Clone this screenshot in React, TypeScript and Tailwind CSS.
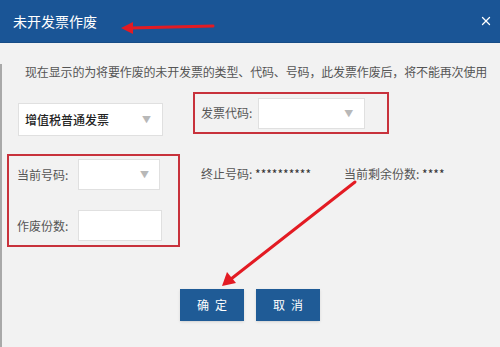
import { X } from 'lucide-react'

const font = { fontFamily: '"Noto Sans CJK SC", "Noto Sans", sans-serif' }

function Caret() {
  return <span className="text-[9px] text-[#b8b8b8] leading-none">▼</span>
}

export default function App() {
  return (
    <div className="relative w-[500px] h-[347px] overflow-hidden bg-[#f2f2f2]" style={font}>
      <div className="h-[43px] bg-[#1a5596] border-b border-[#174c86] flex items-center justify-between pl-[13px] pr-[7px]">
        <span className="text-white text-[14px]">未开发票作废</span>
        <X size={14} strokeWidth={2.2} className="text-white" />
      </div>

      <div className="border-l-2 border-b border-l-[#a9a9a9] border-b-[#fafafa] h-[304px]">
        <p className="mt-[21px] pl-[23px] text-[12px] leading-4 tracking-[-0.15px] text-[#555]">
          现在显示的为将要作废的未开发票的类型、代码、号码，此发票作废后，将不能再次使用
        </p>

        <div className="flex items-start mt-[12px] pl-[16px]">
          <div className="mt-[11px] w-[145px] h-[33px] bg-white border border-[#e0e0e0] flex items-center justify-between pl-[6px] pr-[11px]">
            <span className="text-[12px] text-[#222] font-medium">增值税普通发票</span>
            <Caret />
          </div>
          <div className="ml-[30px] w-[196px] h-[42px] border-2 border-[#c8323c] flex items-center pl-[6px]">
            <span className="text-[12px] text-[#555]">发票代码:</span>
            <div className="ml-[6px] w-[107px] h-[31px] bg-white border border-[#e0e0e0] flex items-center justify-end pr-[11px]">
              <Caret />
            </div>
          </div>
        </div>

        <div className="flex items-start mt-[18px] pl-[5px]">
          <div className="w-[173px] h-[93px] border-2 border-[#c8323c] pl-[8px] pt-[3px] flex flex-col gap-[20px]">
            <div className="flex items-center">
              <span className="text-[12px] text-[#555] w-[61px]">当前号码:</span>
              <div className="w-[82px] h-[31px] bg-white border border-[#e0e0e0] flex items-center justify-end pr-[10px]">
                <Caret />
              </div>
            </div>
            <div className="flex items-center">
              <span className="text-[12px] text-[#555] w-[61px]">作废份数:</span>
              <div className="w-[84px] h-[31px] bg-white border border-[#e0e0e0]" />
            </div>
          </div>
          <div className="mt-[12px] ml-[21px] flex text-[12px] leading-4">
            <span className="text-[#555]">
              终止号码: <span className="text-[#333]">**********</span>
            </span>
            <span className="ml-[33px] text-[#555]">
              当前剩余份数: <span className="text-[#333]">****</span>
            </span>
          </div>
        </div>

        <div className="flex justify-center gap-[12px] mt-[42px] pr-[2px]">
          <button className="w-[64px] h-[32px] bg-[#1f5b96] text-white text-[12px] tracking-[6px] pl-[6px] shadow-sm">确定</button>
          <button className="w-[64px] h-[32px] bg-[#1f5b96] text-white text-[12px] tracking-[6px] pl-[6px] shadow-sm">取消</button>
        </div>
      </div>

      <svg className="absolute inset-0 pointer-events-none" width="500" height="347">
        <line x1="213" y1="26" x2="130" y2="28" stroke="#e31b23" strokeWidth="3" strokeLinecap="round" />
        <polygon points="121,28 133,22 133,34" fill="#e31b23" />
        <line x1="355" y1="182" x2="231" y2="279" stroke="#e31b23" strokeWidth="3" strokeLinecap="round" />
        <polygon points="222,286 227,272 236,283" fill="#e31b23" />
      </svg>
    </div>
  )
}
